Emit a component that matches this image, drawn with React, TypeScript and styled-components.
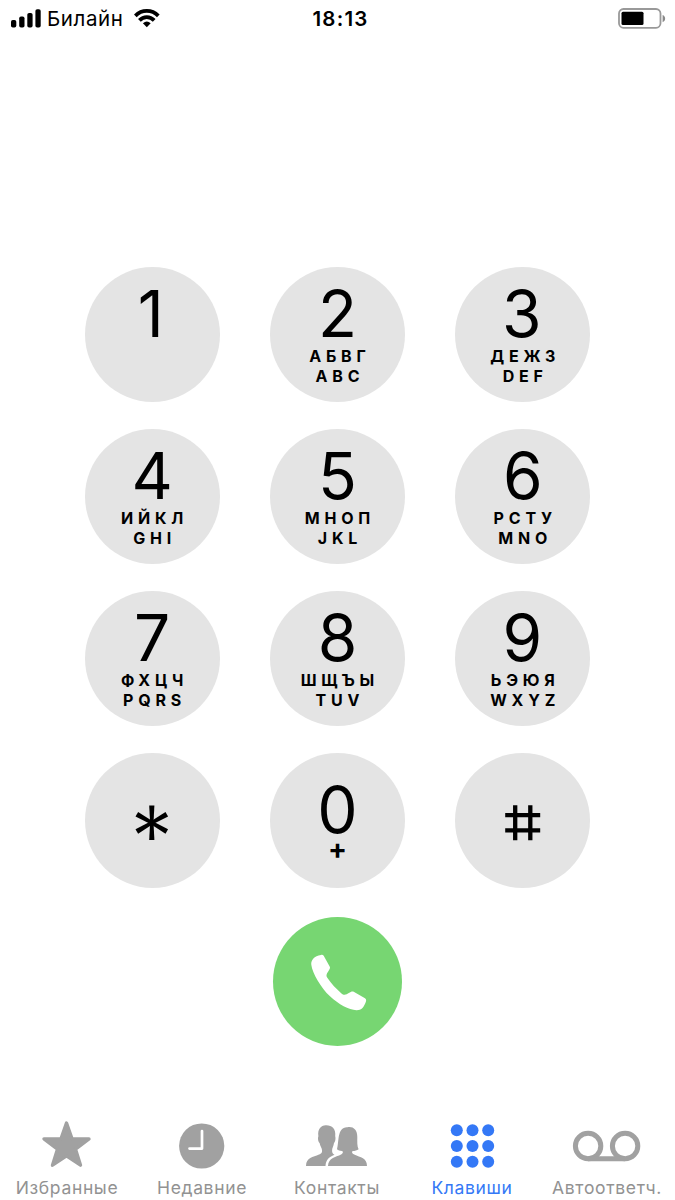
import React from "react";
import styled, { createGlobalStyle } from "styled-components";

const GlobalStyle = createGlobalStyle`
  * { box-sizing: border-box; }
  body { margin: 0; background: #fff; }
`;

const Screen = styled.main`
  width: 675px;
  height: 1200px;
  display: flex;
  flex-direction: column;
  align-items: center;
  overflow: hidden;
  background: #fff;
  color: #000;
  font-family: Inter, "Liberation Sans", sans-serif;
`;

const StatusBar = styled.header`
  width: 100%;
  height: 38px;
  display: grid;
  grid-template-columns: 1fr auto 1fr;
  align-items: center;
  padding: 0 9px 0 11px;
  line-height: 38px;
`;

const Carrier = styled.div`
  display: flex;
  align-items: center;
  font-size: 20.5px;
`;

const CarrierName = styled.span`
  margin: 0 10px 0 5px;
  letter-spacing: 0.6px;
`;

const Clock = styled.time`
  margin-left: 4px;
  font-size: 20.5px;
  font-weight: 600;
  letter-spacing: 1.2px;
`;

const Battery = styled.svg`
  justify-self: end;
  display: block;
`;

const Keypad = styled.section`
  margin-top: 229px;
  display: grid;
  grid-template-columns: repeat(3, 135px);
  grid-auto-rows: 135px;
  gap: 27px 50.3px;
`;

const Key = styled.button<{ $offset?: number }>`
  display: flex;
  flex-direction: column;
  align-items: center;
  padding: ${(p) => p.$offset ?? 15}px 0 0;
  border: 0;
  border-radius: 50%;
  background: #e4e4e4;
  color: #000;
  font-family: inherit;
`;

const Digit = styled.span<{ $nudge?: number }>`
  margin-left: -${(p) => (p.$nudge ?? 0) * 2}px;
  font-size: 64px;
  line-height: 64px;
  font-weight: 400;
`;

const Letters = styled.span`
  font-size: 16px;
  line-height: 20px;
  font-weight: 700;
  letter-spacing: 4.8px;
  margin-right: -4.8px;
  white-space: nowrap;
`;

const LetterRows = styled.span`
  display: flex;
  flex-direction: column;
  align-items: center;
`;

const Plus = styled.span`
  font-size: 28px;
  line-height: 24px;
  font-weight: 700;
  margin-top: -5px;
`;

const CallButton = styled.button`
  width: 129.5px;
  height: 129.5px;
  margin-top: 28.5px;
  padding: 0;
  border: 0;
  border-radius: 50%;
  background: #77d672;
  color: #fff;
  svg { display: block; }
`;

const TabBar = styled.nav`
  width: 100%;
  height: 84px;
  margin-top: auto;
  display: grid;
  grid-template-columns: repeat(5, 135px);
`;

const Tab = styled.a<{ $active?: boolean }>`
  display: flex;
  flex-direction: column;
  align-items: center;
  color: ${(p) => (p.$active ? "#3478f6" : "#a1a1a1")};
`;

const TabLabel = styled.span<{ $active?: boolean }>`
  margin: 1px 1px 0 0;
  font-size: 17.5px;
  line-height: 24px;
  white-space: nowrap;
  color: ${(p) => (p.$active ? "#3478f6" : "#929292")};
  letter-spacing: 0.65px;
`;

const StarKey = () => (
  <svg width="36" height="36" viewBox="0 0 36 36" fill="#000">
    {[0, 60, 120, 180, 240, 300].map((a) => (
      <path key={a} d="M15.2 .5H20.4L19.5 17.8H16.1Z" transform={`rotate(${a} 17.8 17.8)`} />
    ))}
  </svg>
);

const HashKey = () => (
  <svg width="36" height="36" viewBox="0 0 36 36" stroke="#000" strokeWidth="4.3">
    <path d="M10.2 .2V35.2M25.3 .2V35.2M.2 10.2H35.2M.2 25.3H35.2" />
  </svg>
);

const keys: { digit: string; ru?: string; en?: string; nudge?: number }[] = [
  { digit: "1", nudge: 1.5 },
  { digit: "2", ru: "АБВГ", en: "ABC" },
  { digit: "3", ru: "ДЕЖЗ", en: "DEF", nudge: 1 },
  { digit: "4", ru: "ИЙКЛ", en: "GHI" },
  { digit: "5", ru: "МНОП", en: "JKL" },
  { digit: "6", ru: "РСТУ", en: "MNO" },
  { digit: "7", ru: "ФХЦЧ", en: "PQRS" },
  { digit: "8", ru: "ШЩЪЫ", en: "TUV" },
  { digit: "9", ru: "ЬЭЮЯ", en: "WXYZ", nudge: 0.5 },
];

const icons = {
  star: (
    <path
      d="M66.5 13 L72 28.9 L89 28.9 L75.5 39.2 L80.5 55.2 L66.5 45.8 L52.5 55.2 L57.5 39.2 L44 28.9 L61 28.9Z"
      fill="currentColor"
      stroke="currentColor"
      strokeWidth="3.4"
      strokeLinejoin="round"
    />
  ),
  clock: (
    <>
      <circle cx="66.7" cy="36" r="22.6" fill="currentColor" />
      <path d="M67 21V38.6H54.5" fill="none" stroke="#fff" strokeWidth="2.7" strokeLinecap="round" strokeLinejoin="round" />
    </>
  ),
  contacts: (
    <g fill="currentColor">
      <path d="M36 56C36.2 47.5 43 47.3 49 44.6C51.6 43.4 52.2 42.8 52 40C51.9 38 50.2 36.5 49.6 33C48.2 32 47.6 28 48.4 26.2C47.4 19 50.8 15.4 55.8 15.2C61.8 15 66.2 18.5 65.2 26.2C65.9 28 65.3 32 64 33C63.5 36.5 62.2 38 62.1 40C62 42.8 62.6 43.6 64.5 44.8C58.5 47.2 56 50 55.5 56Z" />
      <path d="M58 56C58.5 47.8 65 47.6 71.5 44.2C73.3 43 73.3 41.8 72 41.1C69.5 40.7 68.5 40.5 67 39.3C69.3 32 66.8 16.8 77.5 17.3C83 16.3 87.3 19.5 87.3 27C87.3 32 87 36 88.6 39.3C87 40.5 85 41 82.6 41.1C81.5 42.4 82 43.6 84.2 44.6C90.5 47.6 97 48 97 56Z" />
    </g>
  ),
  keypad: (
    <g fill="currentColor">
      {[20.2, 36, 51.8].flatMap((y) =>
        [51.8, 67.5, 83.2].map((x) => <circle key={`${x}-${y}`} cx={x} cy={y} r="6" />)
      )}
    </g>
  ),
  voicemail: (
    <g fill="none" stroke="currentColor" strokeWidth="5">
      <circle cx="48.1" cy="36" r="12.7" />
      <circle cx="85.1" cy="36" r="12.7" />
      <path d="M48 48.7H85" />
    </g>
  ),
};

const tabs: { label: string; icon: keyof typeof icons; active?: boolean }[] = [
  { label: "Избранные", icon: "star" },
  { label: "Недавние", icon: "clock" },
  { label: "Контакты", icon: "contacts" },
  { label: "Клавиши", icon: "keypad", active: true },
  { label: "Автоответч.", icon: "voicemail" },
];

export default function App() {
  return (
    <Screen>
      <GlobalStyle />
      <StatusBar>
        <Carrier>
          <svg width="31" height="20" viewBox="0 0 31 20">
            <rect x="0" y="11" width="5.3" height="7.5" rx="1.8" />
            <rect x="8.2" y="7.5" width="5.3" height="11" rx="1.8" />
            <rect x="16.3" y="4" width="5.3" height="14.5" rx="1.8" />
            <rect x="24.4" y="0.3" width="5.3" height="18.2" rx="1.8" />
          </svg>
          <CarrierName>Билайн</CarrierName>
          <svg width="26" height="20" viewBox="0 0 26 20" fill="none" stroke="#000" strokeWidth="3.8">
            <path d="M1.3 6.8C7.8 .3 17.8 .3 24.3 6.8" />
            <path d="M5.4 11.3C9.6 7 16 7 20.2 11.3" />
            <path d="M8.9 14.2Q12.8 10.6 16.7 14.2L12.8 18.2Z" fill="#000" stroke="none" />
          </svg>
        </Carrier>
        <Clock>18:13</Clock>
        <Battery width="48" height="22" viewBox="0 0 48 22">
          <rect x="1" y="1" width="41.5" height="18.8" rx="4.5" fill="none" stroke="#999" strokeWidth="1.8" />
          <rect x="3.5" y="3.8" width="22" height="13.3" rx="1.5" />
          <path d="M44.6 7C48 8.2 48 13 44.6 14.2Z" fill="#888" />
        </Battery>
      </StatusBar>
      <Keypad>
        {keys.map((k) => (
          <Key key={k.digit}>
            <Digit $nudge={k.nudge}>{k.digit}</Digit>
            {k.ru && (
              <LetterRows>
                <Letters>{k.ru}</Letters>
                <Letters>{k.en}</Letters>
              </LetterRows>
            )}
          </Key>
        ))}
        <Key $offset={52} aria-label="*"><StarKey /></Key>
        <Key $offset={25}>
          <Digit>0</Digit>
          <Plus>+</Plus>
        </Key>
        <Key $offset={52} aria-label="#"><HashKey /></Key>
      </Keypad>
      <CallButton aria-label="Вызов">
        <svg width="130" height="130" viewBox="0 0 130 130" fill="currentColor">
          <path d="M48 38C49 37.4 50 37.8 50.7 38.8L56.8 49.7C57.5 51 56.5 52.2 55.2 54.4C53.4 57.2 52.8 58.5 54.3 60.8C58.2 66.8 63.5 72 68.2 76.2C71 78.6 72.8 78 76.3 75.8C78.5 74.5 79.3 74 80.7 74.8L92 81.3C93.8 82.4 93.2 84.2 92.3 86.3C90.3 90.9 88.2 93.3 83.5 93.2C75.7 92.8 65.8 87.6 57 79.3C48 70.8 39.3 56.2 38.3 47.7C37.8 43.3 41.2 38.7 48 38Z" />
        </svg>
      </CallButton>
      <TabBar>
        {tabs.map((t) => (
          <Tab key={t.label} $active={t.active}>
            <svg width="135" height="59" viewBox="0 6 135 59">
              {icons[t.icon]}
            </svg>
            <TabLabel $active={t.active}>{t.label}</TabLabel>
          </Tab>
        ))}
      </TabBar>
    </Screen>
  );
}
